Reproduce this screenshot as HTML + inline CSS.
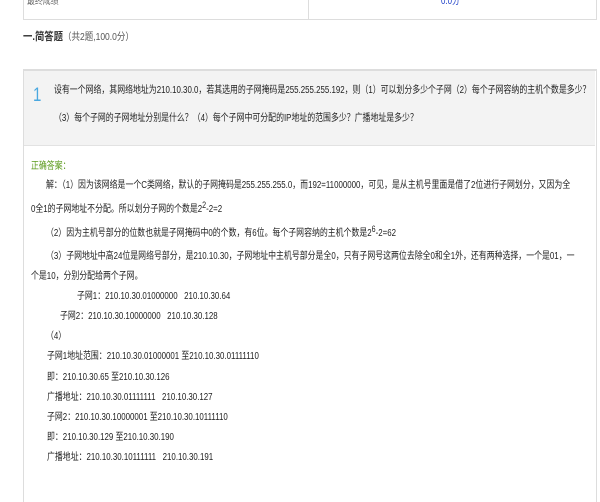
<!DOCTYPE html>
<html><head><meta charset="utf-8"><style>
body{margin:0;width:600px;height:500px;overflow:hidden;background:#fff;font-family:"Liberation Sans","Noto Sans CJK SC",sans-serif;font-size:10px;color:#222;position:relative}
.a{position:absolute;white-space:nowrap;line-height:12px;transform:scaleX(0.79);transform-origin:0 0}
sup{font-size:9px;vertical-align:4px;line-height:0}
</style></head><body>
<div style="position:absolute;left:23px;top:-2px;width:572px;height:21px;border:1px solid #ddd;border-top:none"></div>
<div style="position:absolute;left:308px;top:0;width:1px;height:19px;background:#ddd"></div>
<div class="a" style="left:27px;top:-4px;color:#666">最终成绩</div>
<div class="a" style="left:441px;top:-4px;color:#1a3cc8">0.0分</div>
<div class="a" style="left:23px;top:31px;color:#333;transform:scaleX(0.85)"><b style="font-size:11px">一.简答题</b><span style="color:#555">（共2题,100.0分）</span></div>
<div style="position:absolute;left:23px;top:69px;width:572px;height:431px;border-left:1px solid #ddd;border-right:1px solid #ddd;border-top:2px solid #ddd"></div>
<div style="position:absolute;left:24px;top:71px;width:571px;height:74px;background:#f3f3f3;border-bottom:1px solid #e2e2e2"></div>
<div class="a" style="left:33px;top:86px;font-size:19px;line-height:19px;color:#4aa8e0">1</div>
<div class="a" style="left:54px;top:85px">设有一个网络，其网络地址为210.10.30.0，若其选用的子网掩码是255.255.255.192，则（1）可以划分多少个子网（2）每个子网容纳的主机个数是多少？</div>
<div class="a" style="left:54px;top:113px">（3）每个子网的子网地址分别是什么？（4）每个子网中可分配的IP地址的范围多少？广播地址是多少？</div>
<div class="a" style="left:31px;top:161px;color:#5a9a1a">正确答案：</div>
<div class="a" style="left:46px;top:180px">解：（1）因为该网络是一个C类网络，默认的子网掩码是255.255.255.0，而192=11000000，可见，是从主机号里面是借了2位进行子网划分，又因为全</div>
<div class="a" style="left:31px;top:204px">0全1的子网地址不分配。所以划分子网的个数是2<sup>2</sup>-2=2</div>
<div class="a" style="left:46px;top:228px">（2）因为主机号部分的位数也就是子网掩码中0的个数，有6位。每个子网容纳的主机个数是2<sup>6</sup>-2=62</div>
<div class="a" style="left:46px;top:251px">（3）子网地址中高24位是网络号部分，是210.10.30，子网地址中主机号部分是全0，只有子网号这两位去除全0和全1外，还有两种选择，一个是01，一</div>
<div class="a" style="left:31px;top:271px">个是10，分别分配给两个子网。</div>
<div class="a" style="left:77px;top:291px">子网1：210.10.30.01000000&nbsp;&nbsp;&nbsp;210.10.30.64</div>
<div class="a" style="left:60px;top:311px">子网2：210.10.30.10000000&nbsp;&nbsp;&nbsp;210.10.30.128</div>
<div class="a" style="left:46px;top:331px">（4）</div>
<div class="a" style="left:47px;top:351px">子网1地址范围：210.10.30.01000001 至210.10.30.01111110</div>
<div class="a" style="left:47px;top:372px">即：210.10.30.65 至210.10.30.126</div>
<div class="a" style="left:47px;top:392px">广播地址：210.10.30.01111111&nbsp;&nbsp;&nbsp;210.10.30.127</div>
<div class="a" style="left:47px;top:412px">子网2：210.10.30.10000001 至210.10.30.10111110</div>
<div class="a" style="left:47px;top:432px">即：210.10.30.129 至210.10.30.190</div>
<div class="a" style="left:47px;top:452px">广播地址：210.10.30.10111111&nbsp;&nbsp;&nbsp;210.10.30.191</div>
</body></html>
